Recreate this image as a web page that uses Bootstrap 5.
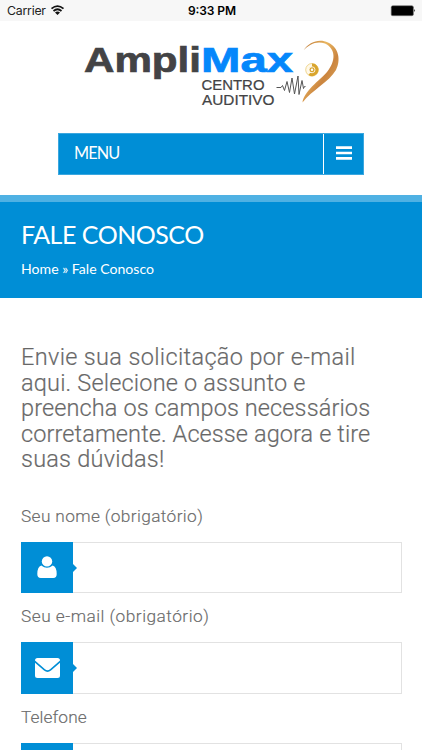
<!DOCTYPE html>
<html lang="pt-BR">
<head>
<meta charset="utf-8">
<meta name="viewport" content="width=device-width, initial-scale=1">
<title>Fale Conosco - AmpliMax Centro Auditivo</title>
<link href="https://cdn.jsdelivr.net/npm/bootstrap@5.3.0/dist/css/bootstrap.min.css" rel="stylesheet">
<style>
html{height:750px;overflow:hidden}
body{font-family:Roboto,"Liberation Sans",sans-serif;color:#666;height:750px;overflow:hidden;background:#fff}
.status{height:21px;background:#f7f7f7;color:#222;font:12.3px/21px Inter,sans-serif;padding:0 6px 0 7px}
.status-side{width:120px}
.clock{color:#000;font-weight:600}
.logo-box{height:111.5px}
.menu-bar{width:306px;height:42px;margin-left:58px;font-family:Lato,sans-serif;border:1px solid #3ba7df;background:#008ed6}
.menu-name{font-size:16.3px;padding-left:15px;letter-spacing:-.9px}
.menu-toggle{width:40px;border-left:1px solid #fff;padding-bottom:2px}
.page-head{margin-top:20.5px;height:103px;border-top:7px solid #4fb1e3;background:#008ed6;font-family:Lato,sans-serif;padding:17px 21px 0}
.page-head h1{font-size:25px;line-height:30px;font-weight:400;letter-spacing:-.5px}
.page-head p{font-size:14.1px;line-height:20px;margin-top:10px}
.intro{font-size:23.5px;font-weight:300;line-height:25.5px;padding:47px 0 0 21px;-webkit-text-stroke:.2px #777}
.intro span{display:block;white-space:nowrap}
.l1{letter-spacing:.35px}.l2{letter-spacing:.18px}.l3{letter-spacing:.12px}.l4{letter-spacing:.1px}.l5{letter-spacing:.23px}
.form-area{padding:30px 20.5px 0 21px}
.form-area label{display:block;font-size:17.3px;font-weight:300;line-height:26px;height:39.2px;white-space:nowrap;letter-spacing:.37px;-webkit-text-stroke:.15px #777}
.form-area .mail-label{letter-spacing:.48px}
.form-area .tel-label{letter-spacing:.08px}
.field-row{height:51.5px;margin-bottom:10px;border:1px solid #e2e2e2}
.field-icon{width:52px;margin:-1px 0 -1px -1px;background:#008ed6}
.field-icon::after{content:"";position:absolute;left:100%;top:22px;border:4px solid transparent;border-left-color:#008ed6;border-right:0}
.field-row input{outline:0;min-width:0}
</style>
<script src="https://cdn.jsdelivr.net/npm/bootstrap@5.3.0/dist/js/bootstrap.bundle.min.js"></script>
</head>
<body>
<div class="status d-flex justify-content-between">
  <div class="status-side d-flex align-items-center"><svg width="60" height="21" viewBox="0 0 60 21"><text x="0" y="15" textLength="39" font-size="12.3" fill="#222">Carrier</text><g fill="none" stroke="#111" stroke-width="1.7"><path d="M44.5 8.7Q50.5 3.5 56.5 8.7M46.5 11Q50.5 7.5 54.5 11"/></g><path d="M48 12.6Q50.5 10.6 53 12.6L50.5 15Z" fill="#111"/></svg></div>
  <div class="clock"><svg width="49" height="21" class="d-block"><text x="1" y="15" textLength="48" font-size="12">9:33 PM</text></svg></div>
  <div class="status-side d-flex justify-content-end"><svg width="26" height="21"><rect x="1.2" y="5.7" width="22.2" height="10" rx="1.5" fill="#000" stroke="#777" stroke-width=".6"/><path d="M24.3 9q1.7 1.5 0 3z" fill="#000"/></svg></div>
</div>
<header>
  <div class="logo-box">
  <svg class="d-block" width="422" height="112" viewBox="0 21 422 112" aria-label="AmpliMax Centro Auditivo">
    <defs><linearGradient id="gold" x1="0" y1="0" x2="1" y2="1"><stop offset="0" stop-color="#b86f2e"/><stop offset=".35" stop-color="#e9b660"/><stop offset=".6" stop-color="#cb8540"/><stop offset="1" stop-color="#e5b865"/></linearGradient></defs>
    <g font-family="Liberation Sans,sans-serif" font-weight="700" font-size="34.5" stroke-width=".7">
      <text x="84" y="72" textLength="117" lengthAdjust="spacingAndGlyphs" fill="#434345" stroke="#434345">Ampli</text>
      <text x="201" y="72" textLength="92" lengthAdjust="spacingAndGlyphs" fill="#0587fb" stroke="#0587fb">Max</text>
    </g>
    <g font-family="Liberation Sans,sans-serif" font-size="13.8" fill="#434345" stroke="#434345" stroke-width=".2">
      <text x="201.5" y="90" textLength="63" lengthAdjust="spacingAndGlyphs">CENTRO</text>
      <text x="202" y="105" textLength="72.5" lengthAdjust="spacingAndGlyphs">AUDITIVO</text>
    </g>
    <path d="M276.5 87.5h4.5l1.5-2 2 5 2.5-9 2.5 11 2.5-14.5 2.5 16 3.5-18 1 18.5 3-14 1.5 8 1-2h1" fill="none" stroke="#555" stroke-width="1"/>
    <path d="M303.5 50.5C309 42 319 38.5 328 42.5C339 47.5 341 60 336 70C329 82 312 90 302.5 102.5C304 91 319 81 327 72C336 61 336 49 325 43.5C317 40.5 309 44 303.5 50.5Z" fill="url(#gold)"/>
    <circle cx="312" cy="69.8" r="6.3" fill="#fff8e8" stroke="#eacb76" stroke-width=".8"/>
    <path d="M312 63.6a6.3 6.3 0 1 1-3.5 11.4l1.5-2h2z" fill="#d9a52d"/><circle cx="312" cy="69.8" r="3" fill="#d9a52d" stroke="#fff" stroke-width=".8"/><circle cx="312" cy="69.8" r="1.2" fill="#fff"/>
  </svg>
  </div>
  <nav class="menu-bar d-flex text-white">
    <div class="menu-name flex-grow-1 d-flex align-items-center">MENU</div>
    <div class="menu-toggle d-flex align-items-center justify-content-center"><svg width="16" height="14"><path d="M0 1.7h16M0 7h16M0 12.3h16" stroke="#fff" stroke-width="2.7"/></svg></div>
  </nav>
</header>
<section class="page-head text-white">
  <h1 class="mb-0">FALE CONOSCO</h1>
  <p class="mb-0">Home » Fale Conosco</p>
</section>
<main>
  <p class="intro mb-0"><span class="l1">Envie sua solicitação por e-mail</span><span class="l2">aqui. Selecione o assunto e</span><span class="l3">preencha os campos necessários</span><span class="l4">corretamente. Acesse agora e tire</span><span class="l5">suas dúvidas!</span></p>
  <form class="form-area">
    <label for="nome">Seu nome (obrigatório)</label>
    <div class="field-row d-flex">
      <div class="field-icon position-relative flex-shrink-0 d-flex align-items-center justify-content-center"><svg width="20" height="22"><circle cx="10" cy="5.4" r="5.2" fill="#fff"/><path d="M4.3 9.6q5.7 4.5 11.4 0Q19.7 11 19.7 18q0 4-3.5 4H3.8Q.3 22 .3 18q0-7 4-8.4Z" fill="#fff"/></svg></div>
      <input id="nome" type="text" class="border-0 flex-grow-1">
    </div>
    <label for="email" class="mail-label">Seu e-mail (obrigatório)</label>
    <div class="field-row d-flex">
      <div class="field-icon position-relative flex-shrink-0 d-flex align-items-center justify-content-center"><svg width="25" height="20" fill="#fff"><path d="M0 2.5Q0 0 2.5 0h20Q25 0 25 2.5L15 11.2q-2.5 2-5 0ZM0 4.8l9 7.7q3.5 2.8 7 0L25 4.8V17.5Q25 20 22.5 20h-20Q0 20 0 17.5Z"/></svg></div>
      <input id="email" type="email" class="border-0 flex-grow-1">
    </div>
    <label for="telefone" class="tel-label">Telefone</label>
    <div class="field-row d-flex">
      <div class="field-icon position-relative flex-shrink-0"></div>
      <input id="telefone" type="tel" class="border-0 flex-grow-1">
    </div>
  </form>
</main>
</body>
</html>
